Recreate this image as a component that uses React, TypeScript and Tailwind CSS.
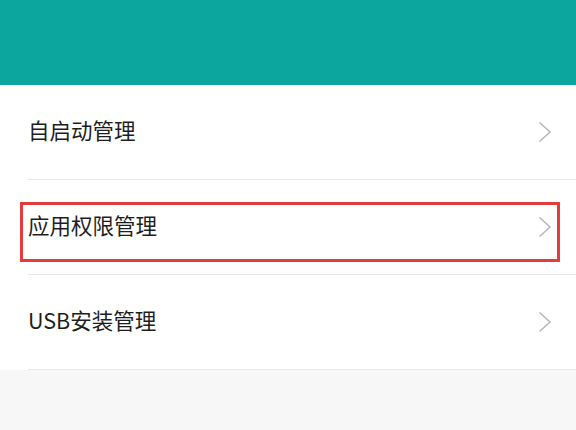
import React from "react";

const items = ["自启动管理", "应用权限管理", "USB安装管理"];

function Chevron() {
  return (
    <svg width="14" height="22" viewBox="0 0 14 22" fill="none">
      <path d="M1.5 1.5 L12 11 L1.5 20.5" stroke="#b9b9b9" strokeWidth="1.6" strokeLinejoin="miter" />
    </svg>
  );
}

export default function App() {
  return (
    <div
      className="w-[576px] h-[430px] bg-[#f7f7f7] overflow-hidden"
      style={{ fontFamily: '"Noto Sans CJK SC", "Noto Sans", sans-serif' }}
    >
      <div className="h-[85px] bg-[#0ca69f]" />
      <div className="bg-white">
        {items.map((t, i) => (
          <div key={t} className="relative pl-[28px]">
            <div className="h-[95px] flex items-center justify-between pr-[24px] border-b border-[#e8e8e8]">
              <span className="text-[21.5px] text-[#1e1e1e] leading-none mb-[4px]">{t}</span>
              <Chevron />
            </div>
            {i === 1 && (
              <div className="absolute left-[20px] top-[22px] w-[540px] h-[60px] border-[3px] border-[#e33c3c]" />
            )}
          </div>
        ))}
      </div>
    </div>
  );
}
